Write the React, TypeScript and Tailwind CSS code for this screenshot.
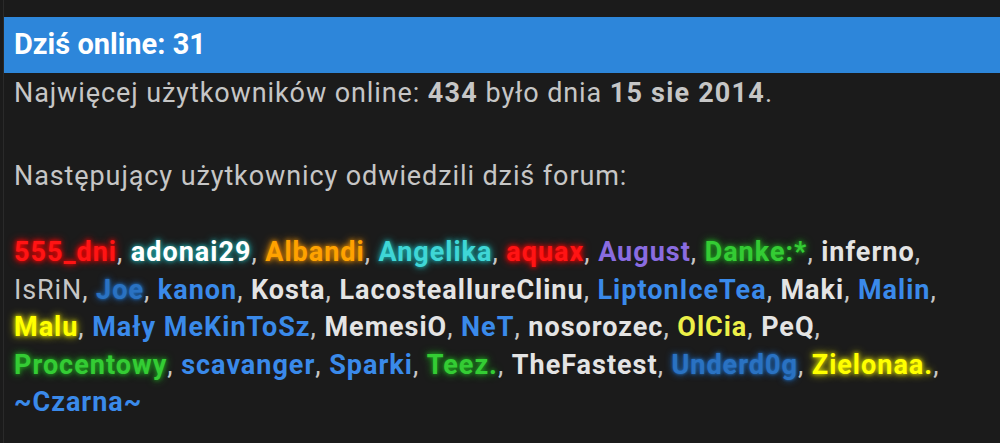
import React from "react";

type N = { n: string; c: string; g?: string; w?: string; br?: boolean };

const names: N[] = [
  { n: "555_dni", c: "text-[#ff1414]", g: "[text-shadow:0_0_4px_#ff0000,0_0_8px_#ff0000]" },
  { n: "adonai29", c: "text-[#ffffff]", g: "[text-shadow:0_0_4px_#1fa5a5,0_0_8px_#1fa5a5]" },
  { n: "Albandi", c: "text-[#ffa200]", g: "[text-shadow:0_0_4px_#e08800,0_0_8px_#e08800]" },
  { n: "Angelika", c: "text-[#3fd6d6]", g: "[text-shadow:0_0_4px_#1aa5a5,0_0_8px_#1aa5a5]" },
  { n: "aquax", c: "text-[#ff1414]", g: "[text-shadow:0_0_4px_#ff0000,0_0_8px_#ff0000]" },
  { n: "August", c: "text-[#8a6ce0]" },
  { n: "Danke:*", c: "text-[#34cc34]", g: "[text-shadow:0_0_4px_#1f9f1f,0_0_8px_#1f9f1f]" },
  { n: "inferno", c: "text-[#e4e4e4]", br: true },
  { n: "IsRiN", c: "text-[#c6c6c6]", w: "font-normal" },
  { n: "Joe", c: "text-[#2a72c2]", g: "[text-shadow:0_0_3px_#1e6cc0,0_0_7px_#1e6cc0]" },
  { n: "kanon", c: "text-[#3a8aea]" },
  { n: "Kosta", c: "text-[#e4e4e4]" },
  { n: "LacosteallureClinu", c: "text-[#e4e4e4]" },
  { n: "LiptonIceTea", c: "text-[#3a8aea]" },
  { n: "Maki", c: "text-[#e4e4e4]" },
  { n: "Malin", c: "text-[#3a8aea]", br: true },
  { n: "Malu", c: "text-[#ffff00]", g: "[text-shadow:0_0_4px_#d8d800,0_0_8px_#d8d800]" },
  { n: "Mały MeKinToSz", c: "text-[#3a8aea]" },
  { n: "MemesiO", c: "text-[#e4e4e4]" },
  { n: "NeT", c: "text-[#3a8aea]" },
  { n: "nosorozec", c: "text-[#e4e4e4]" },
  { n: "OlCia", c: "text-[#ecf048]" },
  { n: "PeQ", c: "text-[#e4e4e4]", br: true },
  { n: "Procentowy", c: "text-[#34cc34]", g: "[text-shadow:0_0_4px_#1f9f1f,0_0_8px_#1f9f1f]" },
  { n: "scavanger", c: "text-[#3a8aea]" },
  { n: "Sparki", c: "text-[#3a8aea]" },
  { n: "Teez.", c: "text-[#34cc34]", g: "[text-shadow:0_0_4px_#1f9f1f,0_0_8px_#1f9f1f]" },
  { n: "TheFastest", c: "text-[#e4e4e4]" },
  { n: "Underd0g", c: "text-[#2a72c2]", g: "[text-shadow:0_0_3px_#1e6cc0,0_0_7px_#1e6cc0]" },
  { n: "Zielonaa.", c: "text-[#ffff00]", g: "[text-shadow:0_0_4px_#d8d800,0_0_8px_#d8d800]", br: true },
  { n: "~Czarna~", c: "text-[#3a8aea]" },
];

export default function App() {
  return (
    <div className="w-[1000px] h-[443px] bg-[#1b1b1b] overflow-hidden font-['Roboto',sans-serif]">
      <div className="ml-[3px] h-full border-l border-[#2a2a2a] pt-[17px]">
        <div className="h-[56px] bg-[#2d86da] flex items-center pl-[10px] text-white font-bold text-[29px]">
          Dziś online: 31
        </div>
        <div className="pl-[10px] text-[27px] leading-[38px] tracking-[0.9px] text-[#c6c6c6] pt-[1px] whitespace-nowrap">
          <p>
            Najwięcej użytkowników online:{" "}
            <b className="font-bold tracking-[1.2px]">434</b> było dnia{" "}
            <b className="font-bold tracking-[1.2px]">15 sie 2014</b>.
          </p>
          <p className="mt-[45px]">Następujący użytkownicy odwiedzili dziś forum:</p>
          <p className="mt-[39px] leading-[37.5px]">
            {names.map((x, i) => (
              <React.Fragment key={x.n}>
                <span className={`${x.w ?? "font-bold tracking-[1px]"} ${x.c} ${x.g ?? ""}`}>{x.n}</span>
                {i < names.length - 1 ? "," : ""}
                {x.br ? <br /> : i < names.length - 1 ? " " : ""}
              </React.Fragment>
            ))}
          </p>
        </div>
      </div>
    </div>
  );
}
